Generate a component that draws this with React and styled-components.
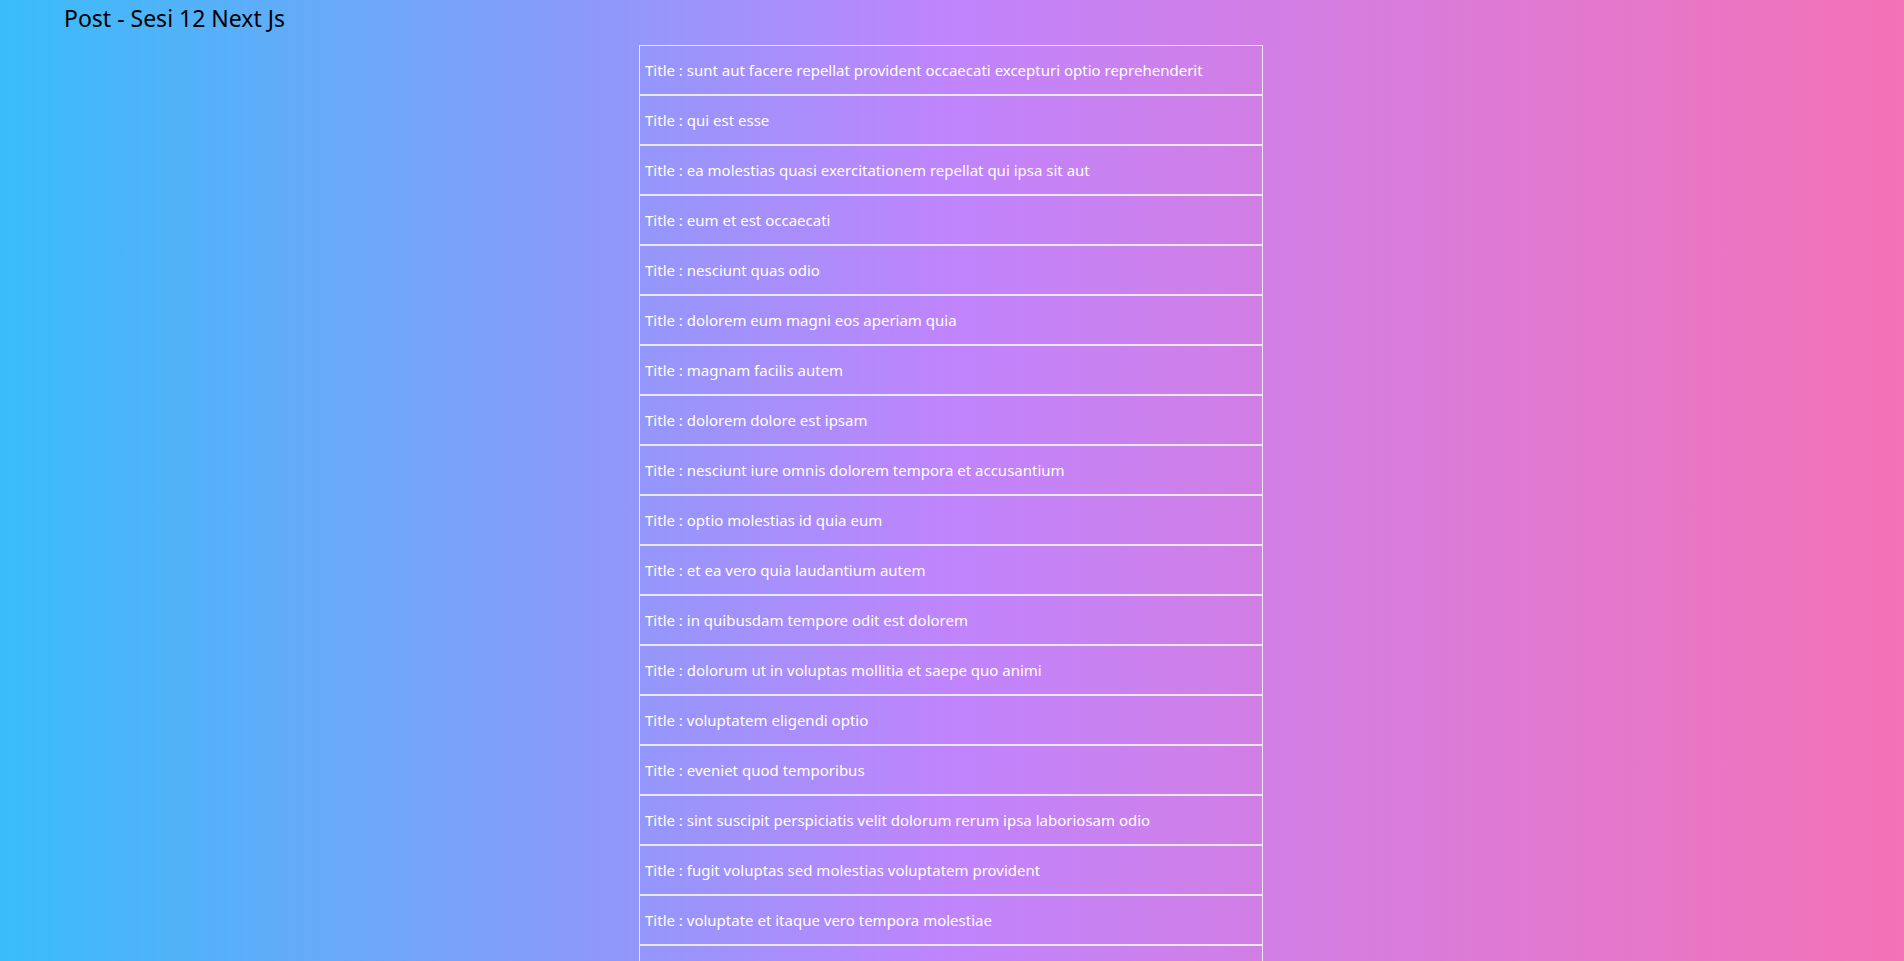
import React from "react";
import styled, { createGlobalStyle } from "styled-components";

const Global = createGlobalStyle`
  html, body { margin: 0; padding: 0; }
  body { font-family: "Noto Sans", "Open Sans", sans-serif; }
`;

const Page = styled.main`
  min-height: 100vh;
  background: linear-gradient(to right, #38bdf8, #c084fc, #f472b6);
  padding-bottom: 20px;
`;

const Header = styled.h1`
  margin: 0;
  padding: 0 0 0 64px;
  height: 37px;
  line-height: 36px;
  font-size: 23px;
  font-weight: 400;
  color: #000;
`;

const List = styled.ul`
  list-style: none;
  margin: 8px auto 0;
  padding: 0;
  width: 624px;
  transform: translateX(-1px);
`;

const Row = styled.li`
  box-sizing: border-box;
  height: 50px;
  border: 1px solid #e8e8ec;
  padding: 0 5px;
  display: flex;
  align-items: center;
  color: #fff;
  font-size: 15px;
`;

const titles = [
  "sunt aut facere repellat provident occaecati excepturi optio reprehenderit",
  "qui est esse",
  "ea molestias quasi exercitationem repellat qui ipsa sit aut",
  "eum et est occaecati",
  "nesciunt quas odio",
  "dolorem eum magni eos aperiam quia",
  "magnam facilis autem",
  "dolorem dolore est ipsam",
  "nesciunt iure omnis dolorem tempora et accusantium",
  "optio molestias id quia eum",
  "et ea vero quia laudantium autem",
  "in quibusdam tempore odit est dolorem",
  "dolorum ut in voluptas mollitia et saepe quo animi",
  "voluptatem eligendi optio",
  "eveniet quod temporibus",
  "sint suscipit perspiciatis velit dolorum rerum ipsa laboriosam odio",
  "fugit voluptas sed molestias voluptatem provident",
  "voluptate et itaque vero tempora molestiae",
  "adipisci placeat illum aut reiciendis qui",
  "doloribus ad provident suscipit at",
];

export default function App() {
  return (
    <>
      <Global />
      <Page>
        <Header>Post - Sesi 12 Next Js</Header>
        <List>
          {titles.map((t, i) => (
            <Row key={i}>Title : {t}</Row>
          ))}
        </List>
      </Page>
    </>
  );
}
